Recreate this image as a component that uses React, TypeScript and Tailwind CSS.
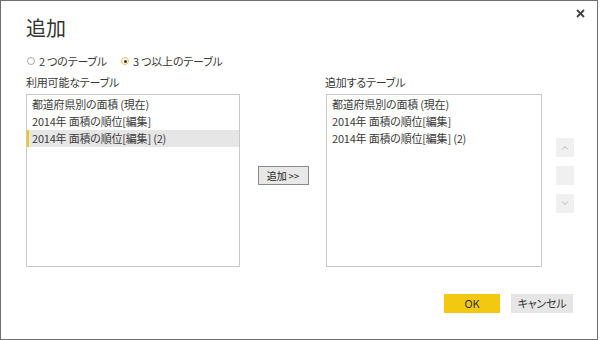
import { useState } from "react"

const tables = ["都道府県別の面積 (現在)", "2014年 面積の順位[編集]", "2014年 面積の順位[編集] (2)"]

const font = "font-['Noto_Sans_CJK_JP','Noto_Sans',sans-serif] [font-feature-settings:'palt']"

function Radio({ checked, label }: { checked: boolean; label: string }) {
  return (
    <label className="flex items-center gap-[4px]">
      <span
        className={`flex h-[8px] w-[8px] items-center justify-center rounded-full border ${
          checked ? "border-[#e8c86a] bg-[#fffbe6]" : "border-[#a8a8a8]"
        }`}
      >
        {checked && <span className="h-[3px] w-[3px] rounded-full bg-[#333]" />}
      </span>
      <span>{label}</span>
    </label>
  )
}

function ListBox({ items, selected, className }: { items: string[]; selected?: number; className: string }) {
  return (
    <div className={`h-[173px] border border-[#c9c9c9] bg-white py-[1px] ${className}`}>
      {items.map((item, i) => (
        <div
          key={item}
          className={`flex h-[17px] items-center ${
            i === selected ? "border-l-2 border-[#f2c811] bg-[#e6e6e6] pl-[3px]" : "pl-[5px]"
          }`}
        >
          {item}
        </div>
      ))}
    </div>
  )
}

function MoveButton({ children }: { children?: React.ReactNode }) {
  return (
    <div className="flex h-[19px] w-[18px] items-center justify-center bg-[#f0f0f0] text-[#b8b8b8]">{children}</div>
  )
}

export default function App() {
  const [mode] = useState(3)

  return (
    <div className={`h-[340px] w-[600px] bg-white text-[11px] tracking-[-0.2px] text-[#3a3a3a] ${font}`}>
      <div className="relative flex h-[340px] w-[598px] flex-col border border-[#6e6e6e] pl-[25px]">
        {/* close */}
        <svg className="absolute right-[12px] top-[8px]" width="9" height="9" viewBox="0 0 9 9">
          <path d="M1 1L8 8M8 1L1 8" stroke="#444" strokeWidth="1.8" />
        </svg>

        <h1 className="mt-[13px] h-[28px] text-[20px] leading-[28px] tracking-normal text-[#333]">追加</h1>

        <div className="mt-[11px] flex h-[16px] items-center gap-[14px] pl-[1px]">
          <Radio checked={mode === 2} label="2 つのテーブル" />
          <Radio checked={mode === 3} label="3 つ以上のテーブル" />
        </div>

        <div className="mt-[4px] flex h-[18px] items-center">
          <span className="w-[299px]">利用可能なテーブル</span>
          <span>追加するテーブル</span>
        </div>

        <div className="mt-[3px] flex">
          <ListBox items={tables} selected={2} className="w-[214px]" />
          <div className="flex w-[86px] justify-center pt-[72px]">
            <button className="h-[19px] w-[51px] border border-[#8a8a8a] bg-[#e8e8e8] text-[10px] leading-[17px] text-[#222]">
              追加 &gt;&gt;
            </button>
          </div>
          <ListBox items={tables} className="w-[216px]" />
          <div className="ml-[14px] flex flex-col gap-[9px] pt-[44px]">
            <MoveButton>
              <svg width="8" height="5" viewBox="0 0 8 5">
                <path d="M1 4.5L4 1.5L7 4.5" stroke="currentColor" fill="none" />
              </svg>
            </MoveButton>
            <MoveButton />
            <MoveButton>
              <svg width="8" height="5" viewBox="0 0 8 5">
                <path d="M1 0.5L4 3.5L7 0.5" stroke="currentColor" fill="none" />
              </svg>
            </MoveButton>
          </div>
        </div>

        <div className="mt-[27px] flex justify-end gap-[11px] pr-[24px]">
          <button className="h-[19px] w-[56px] bg-[#f2c811] text-[11px] text-[#333]">OK</button>
          <button className="h-[19px] w-[62px] bg-[#e6e6e6] text-[11px] text-[#333]">キャンセル</button>
        </div>
      </div>
    </div>
  )
}
